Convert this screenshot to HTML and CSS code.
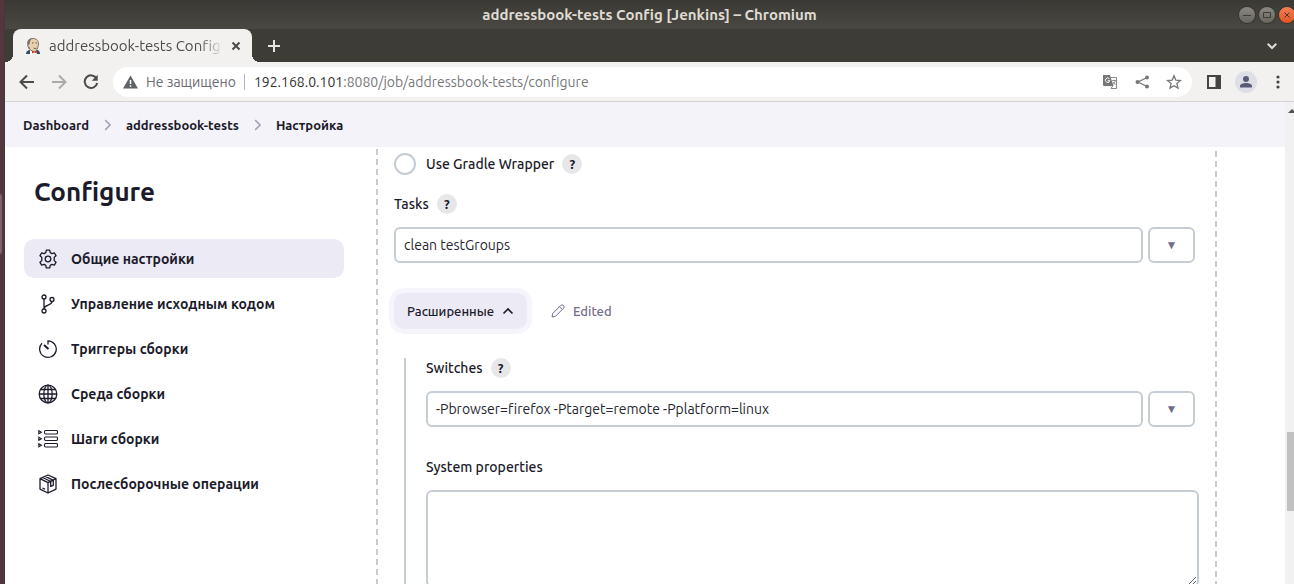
FILE: index.html
```html
<!DOCTYPE html>
<html lang="ru">
<head>
<meta charset="utf-8">
<title>addressbook-tests Config [Jenkins]</title>
<link rel="stylesheet" href="styles.css">
</head>
<body>
<div class="desktop">
  <div class="dock"><span class="dock-mark"></span></div>
  <div class="window">
    <header class="titlebar">
      <span class="window-title">addressbook-tests Config [Jenkins] – Chromium</span>
      <div class="window-buttons">
        <button class="win-btn" type="button" aria-label="Свернуть"><svg viewBox="0 0 16 16"><path d="M4 8.500h8"/></svg></button>
        <button class="win-btn" type="button" aria-label="Развернуть"><svg viewBox="0 0 16 16"><path d="M4.500 5.500h7v5h-7z"/></svg></button>
        <button class="win-btn win-close" type="button" aria-label="Закрыть"><svg viewBox="0 0 16 16"><path d="M5.500 5.500l5 5M10.500 5.500l-5 5"/></svg></button>
      </div>
    </header>
    <div class="tabstrip">
      <div class="tab">
        <svg class="favicon" viewBox="0 0 16 16"><path fill="#335061" d="M1 16c0-3 2-4 4-4l7 0c2 0 3 2 3 4z"/><path fill="#e6d0ae" stroke="#5b4a40" stroke-width=".7" d="M3 5c0-3 2-4.500 5-4.500S13.500 2 13.500 6c0 4-2 7-4.500 7.500C6.500 13.500 4 11 3.800 9 2.500 9 2.200 7 3.300 6.800z"/><path fill="#7c6f66" d="M2.500 7C1.500 3 4 .3 7 .5 5 2 5 4 4.500 6.500zM2.800 8.500l1.200 3 1-1-1-2z"/><path fill="#fff" d="M5 12l3 2 3-2 1 4H5z"/><path fill="#d33833" d="M7 12.800l2 .8 2.500-1.300.3 3-2.500-.8-2.300 1z"/><path stroke="#40352e" stroke-width=".8" fill="none" d="M7 5.200l1.500-.5M10.500 4.700l1.500.5M8.500 10c1 .8 2 .6 3 0"/><circle cx="8" cy="6.500" r=".6"/><circle cx="11.300" cy="6.500" r=".6"/></svg>
        <span class="tab-title">addressbook-tests Config</span>
        <button class="tab-close" type="button" aria-label="Закрыть вкладку"><svg viewBox="0 0 10 10"><path d="M1.500 1.500l7 7M8.500 1.500l-7 7"/></svg></button>
      </div>
      <button class="tab-new" type="button" aria-label="Новая вкладка"><svg viewBox="0 0 12 12"><path d="M6 0v12M0 6h12"/></svg></button>
      <button class="tab-list" type="button" aria-label="Список вкладок"><svg viewBox="0 0 10 8"><path d="M.7 1.700L5 6 9.300 1.700"/></svg></button>
    </div>
    <div class="toolbar">
      <button class="tool" type="button" aria-label="Назад"><svg viewBox="0 0 16 16"><path d="M15 8H2M8 1.500L1.500 8 8 14.500"/></svg></button>
      <button class="tool tool-off" type="button" aria-label="Вперёд"><svg viewBox="0 0 16 16"><path d="M1 8h13M8 1.500L14.500 8 8 14.500"/></svg></button>
      <button class="tool" type="button" aria-label="Обновить"><svg viewBox="0 0 16 16"><path d="M13.500 4.500A6.300 6.300 0 1 0 14.200 9"/><path d="M14.700.8v5.900H8.800z" fill="currentColor" stroke="none"/></svg></button>
      <div class="omnibox">
        <svg class="warn" viewBox="0 0 15 14"><path fill="#5f6368" d="M7.500.5L15 13.500H0z"/><path stroke="#fff" stroke-width="1.500" d="M7.500 5v4M7.500 10.200v1.600"/></svg>
        <span class="security">Не защищено</span>
        <span class="url"><b>192.168.0.101</b>:8080/job/addressbook-tests/configure</span>
        <div class="omni-actions">
          <button class="omni-btn" type="button" aria-label="Перевести"><svg viewBox="0 0 16 16"><path fill="#777" d="M1 1h7l3.500 11H2.200A1.200 1.200 0 0 1 1 10.800z"/><path fill="none" stroke="#888" stroke-width="1" d="M9 3.500h5.500v11H9l2-3"/><path fill="none" stroke="#fff" stroke-width="1" d="M7.300 4.700a2.200 2.200 0 1 0 .5 2H5.800"/><path fill="none" stroke="#888" stroke-width=".9" d="M10 6.500h4M12 5.500v1M13.300 6.500c-.5 2-1.500 3.200-2.500 4M11 8l2.500 3"/></svg></button>
          <button class="omni-btn" type="button" aria-label="Поделиться"><svg viewBox="0 0 16 16"><path fill="none" stroke="#777" stroke-width="1.300" d="M13 3.500L4 8l9 4.500"/><g fill="#777"><circle cx="13" cy="3.500" r="2"/><circle cx="3.500" cy="8" r="2"/><circle cx="13" cy="12.500" r="2"/></g></svg></button>
          <button class="omni-btn" type="button" aria-label="Добавить в закладки"><svg viewBox="0 0 16 16"><path fill="none" stroke="#777" stroke-width="1.300" d="M8 1.800l1.800 4.300 4.700.4-3.600 3 1.100 4.600L8 11.700l-4 2.400 1.100-4.600-3.600-3 4.700-.4z"/></svg></button>
        </div>
      </div>
      <button class="tool side-panel" type="button" aria-label="Боковая панель"><svg viewBox="0 0 16 16"><path fill="#444" stroke="none" d="M1 1h14v14H1zM3 3v10h6.500V3z" fill-rule="evenodd"/></svg></button>
      <button class="profile" type="button" aria-label="Профиль"><svg viewBox="0 0 14 14"><circle cx="7" cy="4" r="3"/><path d="M1 12.500V11c0-2 3-3 6-3s6 1 6 3v1.500z"/></svg></button>
      <button class="tool menu" type="button" aria-label="Меню"><svg viewBox="0 0 16 16"><g fill="#444" stroke="none"><circle cx="8" cy="3" r="1.600"/><circle cx="8" cy="8" r="1.600"/><circle cx="8" cy="13" r="1.600"/></g></svg></button>
    </div>
    <div class="viewport">
      <div class="page">
        <nav class="breadcrumbs" aria-label="Навигация">
          <a href="#">Dashboard</a>
          <svg viewBox="0 0 6 10"><path d="M1 .8L5.200 5 1 9.200"/></svg>
          <a href="#">addressbook-tests</a>
          <svg viewBox="0 0 6 10"><path d="M1 .8L5.200 5 1 9.200"/></svg>
          <a href="#">Настройка</a>
        </nav>
        <div class="columns">
          <aside class="sidebar">
            <h1>Configure</h1>
            <nav class="tasks">
              <a class="task active" href="#"><svg viewBox="0 0 20 20"><path stroke-linejoin="round" d="M8.300 1.200h3.400l.5 2.400 1.700 1 2.400-.8 1.700 2.900-1.800 1.700v3.200l1.800 1.700-1.700 2.900-2.400-.8-1.700 1-.5 2.400H8.300l-.5-2.400-1.700-1-2.400.8L2 13.300l1.800-1.700V8.400L2 6.700l1.700-2.900 2.400.8 1.700-1z"/><circle cx="10" cy="10" r="2.800"/></svg>Общие настройки</a>
              <a class="task" href="#"><svg viewBox="0 0 20 20"><circle cx="6" cy="3" r="2"/><circle cx="14" cy="5.500" r="2"/><circle cx="6" cy="17" r="2"/><path d="M6 5v10M14 7.500c0 4-7.500 3-8 7"/></svg>Управление исходным кодом</a>
              <a class="task" href="#"><svg viewBox="0 0 20 20"><path d="M10 5.500V1.800A8.300 8.300 0 1 1 4 4.300"/><path d="M6 6l4.500 4" stroke-width="2"/></svg>Триггеры сборки</a>
              <a class="task" href="#"><svg viewBox="0 0 20 20"><circle cx="10" cy="10" r="8.800"/><ellipse cx="10" cy="10" rx="4.200" ry="8.800"/><path d="M10 1.200v17.600M1.200 10h17.600M2.500 5.500h15M2.500 14.500h15"/></svg>Среда сборки</a>
              <a class="task" href="#"><svg viewBox="0 0 20 20"><g stroke-width="1.100"><rect x="6.500" y="1.500" width="13" height="3.500" rx="1.200"/><rect x="6.500" y="8" width="13" height="3.500" rx="1.200"/><rect x="6.500" y="14.500" width="13" height="3.500" rx="1.200"/><path d="M.8 1.800l2.600 1.500-2.600 1.500zM.8 8.300l2.600 1.500-2.600 1.500zM.8 14.800l2.600 1.500-2.600 1.500z"/></g></svg>Шаги сборки</a>
              <a class="task" href="#"><svg viewBox="0 0 20 20"><path stroke-linejoin="round" d="M10 1l8 3.700v10.400L10 19l-8-3.900V4.700zM2 4.700l8 4 8-4M10 8.700V19M4.700 3.500l8 4M7.300 2.300l8 4v5l-2.600 1.200v-5M4.500 14l2.500 1.200"/></svg>Послесборочные операции</a>
            </nav>
          </aside>
          <main class="main">
            <form class="builder">
              <div class="choice">
                <input class="radio" type="radio" id="wrapper" name="gradle">
                <label for="wrapper">Use Gradle Wrapper</label>
                <button class="help" type="button">?</button>
              </div>
              <div class="caption"><label for="tasks">Tasks</label><button class="help" type="button">?</button></div>
              <div class="row">
                <input class="field" type="text" id="tasks" value="clean testGroups">
                <button class="expand" type="button">▼</button>
              </div>
              <div class="advanced">
                <button class="advanced-btn" type="button">Расширенные <svg viewBox="0 0 12 8"><path d="M1.500 6.500L6 2l4.500 4.500"/></svg></button>
                <span class="edited"><svg viewBox="0 0 14 14"><path d="M1 13l.8-3.600L9.700 1.500a1.800 1.800 0 0 1 2.800 2.800L4.600 12.200zM8.500 2.700l2.800 2.800"/></svg>Edited</span>
              </div>
              <div class="nested">
                <div class="caption"><label for="switches">Switches</label><button class="help" type="button">?</button></div>
                <div class="row">
                  <input class="field" type="text" id="switches" value="-Pbrowser=firefox -Ptarget=remote -Pplatform=linux">
                  <button class="expand" type="button">▼</button>
                </div>
                <div class="caption props"><label for="props">System properties</label></div>
                <textarea class="area" id="props"></textarea>
              </div>
            </form>
          </main>
        </div>
      </div>
      <div class="scrollbar"><svg viewBox="0 0 8 4"><path d="M0 4l4-4 4 4z"/></svg><span class="thumb"></span></div>
    </div>
  </div>
</div>
</body>
</html>
```
FILE: styles.css
```css
* { box-sizing: border-box; }
body { margin: 0; overflow: hidden; font-family: Ubuntu, "Noto Sans", sans-serif; font-size: 14px; color: #1c1b2b; }
button { padding: 0; border: 0; background: none; font: inherit; color: inherit; }
a { color: inherit; text-decoration: none; }
svg { display: block; flex: none; fill: none; stroke: currentColor; }

.desktop { display: flex; height: 100vh; overflow: hidden; }
.dock { flex: none; width: 5px; padding-top: 194px; background: #52373e; border-right: 1px solid #463438; }
.dock-mark { display: block; width: 2px; height: 60px; background: #7b6369; border-radius: 0 2px 2px 0; }
.window { flex: 1; min-width: 0; display: flex; flex-direction: column; background: #fff; }

/* Window frame */
.titlebar { position: relative; flex: none; display: flex; align-items: center; justify-content: center; height: 29px; background: linear-gradient(#3a3935, #4a4842); color: #dfdbd2; font-size: 15px; font-weight: 700; font-variant-ligatures: none; }
.window-buttons { position: absolute; right: -1px; top: 7px; display: flex; gap: 4px; }
.win-btn { width: 16px; height: 16px; border-radius: 50%; background: linear-gradient(#8a8880, #66645d); color: #3c3b37; box-shadow: 0 0 0 1px #35342f; }
.win-close { background: linear-gradient(#f58057, #e2531f); }

.tabstrip { flex: none; display: flex; align-items: flex-end; height: 33px; padding-left: 8px; background: #3d3c37; }
.tab { position: relative; display: flex; align-items: center; width: 239px; height: 33px; padding: 0 11px 0 12px; border-radius: 8px 8px 0 0; background: #f2f1f0; color: #4b4b4b; font-size: 15px; font-variant-ligatures: none; }
.tab::before, .tab::after { content: ""; position: absolute; bottom: 0; width: 8px; height: 8px; }
.tab::before { left: -8px; background: radial-gradient(circle at 0 0, transparent 8px, #f2f1f0 8px); }
.tab::after { right: -8px; background: radial-gradient(circle at 100% 0, transparent 8px, #f2f1f0 8px); }
.favicon { width: 16px; height: 16px; margin-right: 8px; stroke: none; }
.tab-title { flex: 1; overflow: hidden; white-space: nowrap; -webkit-mask-image: linear-gradient(90deg, #000 86%, transparent); mask-image: linear-gradient(90deg, #000 86%, transparent); }
.tab-close { margin-left: 8px; }
.tab-close svg { width: 10px; height: 10px; stroke-width: 2; }
.tab-new { align-self: center; margin-left: 16px; color: #e6e4df; }
.tab-new svg { width: 12px; height: 12px; stroke-width: 2; }
.tab-list { align-self: center; margin: 0 17px 0 auto; color: #dfdbd2; }
.tab-list svg { width: 10px; height: 8px; stroke-width: 2; }

.toolbar { flex: none; display: flex; align-items: center; height: 40px; padding: 0 8px 0 14px; background: #f2f1f0; border-bottom: 1px solid #d5d3d6; }
.tool { margin-right: 16px; color: #4b4b4b; }
.tool svg { width: 16px; height: 16px; stroke-width: 2; }
.tool-off { color: #aaa; }
.omnibox { flex: 1; display: flex; align-items: center; height: 30px; margin-right: 14px; margin-left: -2px; padding: 0 10px; border-radius: 15px; background: #fff; white-space: nowrap; }
.warn { width: 15px; height: 14px; margin-right: 8px; stroke: none; }
.security { padding-right: 8px; margin-right: 9px; border-right: 1px solid #b5b5b8; color: #6b6b70; font-size: 14px; line-height: 16px; }
.url { color: #77777a; font-size: 14px; }
.url b { color: #333; font-weight: 400; }
.omni-actions { display: flex; gap: 16px; margin-left: auto; }
.omni-btn svg { width: 16px; height: 16px; stroke: none; }
.side-panel { margin-right: 13px; }
.profile { width: 22px; height: 22px; padding: 4px; margin-right: 13px; border-radius: 50%; background: #dedee6; }
.profile svg { width: 14px; height: 14px; fill: #5a5b78; stroke: none; }
.menu { margin: 0; }

/* Page */
.viewport { flex: 1; min-height: 0; display: flex; }
.page { flex: 1; min-width: 0; overflow: hidden; }
.breadcrumbs { display: flex; align-items: center; gap: 15px; height: 45px; padding-left: 18px; background: #f5f3fa; font-size: 13px; font-weight: 600; }
.breadcrumbs svg { width: 7px; height: 12px; color: #a5a2b5; stroke-width: 1.3; }
.columns { display: flex; }
.sidebar { flex: none; width: 371px; padding: 26px 32px 0 19px; }
h1 { margin: 0 0 28px; padding-left: 10px; font-size: 26px; line-height: 38px; font-weight: 700; }
.tasks { display: flex; flex-direction: column; gap: 6px; }
.task { display: flex; align-items: center; gap: 13px; height: 39px; padding: 0 14px; border-radius: 10px; font-weight: 600; white-space: nowrap; }
.task svg { width: 20px; height: 20px; stroke-width: 1.3; }
.task.active { background: #eceaf5; font-weight: 700; }

.main { flex: 1; min-width: 0; padding-right: 68px; }
.builder { padding: 4px 22px 40px 18px; background: repeating-linear-gradient(#fff 0 2px, #c5ccd3 2px 8px, #fff 8px 10px) left / 2px 100% no-repeat, repeating-linear-gradient(#fff 0 4px, #c5ccd3 4px 10px) right / 2px 100% no-repeat; font-weight: 500; }
.choice { display: flex; align-items: center; height: 26px; }
.radio { appearance: none; width: 22px; height: 22px; margin: 0 10px 0 0; border: 2px solid #c5ccd3; border-radius: 50%; }
.help { width: 20px; height: 20px; margin-left: 8px; border-radius: 50%; background: #e7e7e9; font-size: 13px; font-weight: 700; line-height: 20px; }
.caption { display: flex; align-items: center; height: 20px; margin: 17px 0 13px; }
.row { display: flex; gap: 5px; }
.field { flex: 1; min-width: 0; height: 36px; padding: 0 8px; border: 2px solid #c5ccd3; border-radius: 6px; background: #fff; color: #26262f; font: inherit; font-weight: 400; font-variant-ligatures: none; }
.expand { width: 47px; height: 36px; border: 2px solid #c5ccd3; border-radius: 6px; color: #736d8c; font-size: 12px; }
.advanced { display: flex; align-items: center; gap: 24px; margin-top: 30px; }
.advanced-btn { display: flex; align-items: center; gap: 8px; height: 36px; padding: 0 13px; border-radius: 10px; background: #eceaf5; box-shadow: 0 0 0 5px #f6f5fb; font-size: 13px; font-weight: 500; }
.advanced-btn svg { width: 12px; height: 8px; stroke-width: 1.6; }
.edited { display: flex; align-items: center; gap: 8px; color: #736d8c; font-size: 13px; }
.edited svg { width: 14px; height: 14px; }
.nested { margin: 29px 0 0 10px; padding-left: 20px; border-left: 2px solid #c5ccd3; }
.nested .caption:first-child { margin-top: 0; }
.nested .props { margin-top: 30px; }
.area { display: block; width: calc(100% + 4px); height: 97px; border: 2px solid #c5ccd3; border-radius: 6px; }

.scrollbar { flex: none; width: 9px; padding: 7px 0 0 3px; overflow: hidden; background: #f1f1f1; }
.scrollbar svg { width: 8px; height: 4px; fill: #505050; stroke: none; }
.thumb { display: block; height: 79px; margin: 319px 0 0 -1px; background: #c1c1c1; }
```
